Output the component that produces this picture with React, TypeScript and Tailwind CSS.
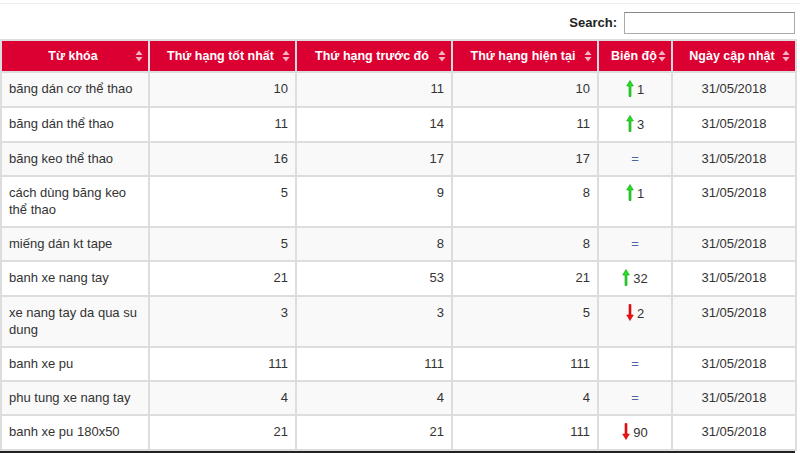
import React from 'react'

type Row = {
  keyword: string
  best: number
  prev: number
  current: number
  change: 'up' | 'down' | 'same'
  amount?: number
}

const rows: Row[] = [
  { keyword: 'băng dán cơ thể thao', best: 10, prev: 11, current: 10, change: 'up', amount: 1 },
  { keyword: 'băng dán thể thao', best: 11, prev: 14, current: 11, change: 'up', amount: 3 },
  { keyword: 'băng keo thể thao', best: 16, prev: 17, current: 17, change: 'same' },
  { keyword: 'cách dùng băng keo thể thao', best: 5, prev: 9, current: 8, change: 'up', amount: 1 },
  { keyword: 'miếng dán kt tape', best: 5, prev: 8, current: 8, change: 'same' },
  { keyword: 'banh xe nang tay', best: 21, prev: 53, current: 21, change: 'up', amount: 32 },
  { keyword: 'xe nang tay da qua su dung', best: 3, prev: 3, current: 5, change: 'down', amount: 2 },
  { keyword: 'banh xe pu', best: 111, prev: 111, current: 111, change: 'same' },
  { keyword: 'phu tung xe nang tay', best: 4, prev: 4, current: 4, change: 'same' },
  { keyword: 'banh xe pu 180x50', best: 21, prev: 21, current: 111, change: 'down', amount: 90 },
]

const headers = ['Từ khóa', 'Thứ hạng tốt nhất', 'Thứ hạng trước đó', 'Thứ hạng hiện tại', 'Biên độ', 'Ngày cập nhật']

const SortIcon = () => (
  <svg width="8" height="12" viewBox="0 0 8 12" className="absolute right-[5px] top-1/2 -translate-y-1/2">
    <path d="M4 0.5 L7.5 5 L0.5 5 Z" fill="#f7b3c2" />
    <path d="M4 11.5 L7.5 7 L0.5 7 Z" fill="#f7b3c2" />
  </svg>
)

const UpArrow = () => (
  <svg width="8" height="17" viewBox="0 0 8 17" className="inline-block align-[-3px] mr-[3px]">
    <path d="M4 0.5 L7.3 6 L5 6 L5 16.5 L3 16.5 L3 6 L0.7 6 Z" fill="#22e022" stroke="#139c13" strokeWidth="0.6" />
  </svg>
)

const DownArrow = () => (
  <svg width="8" height="17" viewBox="0 0 8 17" className="inline-block align-[-3px] mr-[3px]">
    <path d="M4 16.5 L7.3 11 L5 11 L5 0.5 L3 0.5 L3 11 L0.7 11 Z" fill="#f41010" stroke="#c00000" strokeWidth="0.6" />
  </svg>
)

const Change = ({ row }: { row: Row }) => {
  if (row.change === 'same') return <span className="text-[#4f63a8] text-[13px]">=</span>
  return (
    <span className="whitespace-nowrap">
      {row.change === 'up' ? <UpArrow /> : <DownArrow />}
      {row.amount}
    </span>
  )
}

const cell = 'border-2 border-[#ddd] px-[7px] pt-[7px] pb-[8px] align-top'

export default function App() {
  return (
    <div className="w-[800px] h-[453px] overflow-hidden bg-white font-['Liberation_Sans',Arial,sans-serif] text-[13px] text-[#333]">
      <div className="mt-[3px] border-t border-[#eee]" />
      <div className="flex items-center justify-end gap-[7px] pr-[5px] pt-[6px] h-[35px] pb-[3px]">
        <label className="font-bold text-[13px] text-[#222]">Search:</label>
        <input className="w-[171px] h-[22px] border border-[#aaa] border-t-[#888] bg-white outline-none" />
      </div>
      <table className="w-[795px] table-fixed border-collapse leading-[17px]">
        <colgroup>
          <col className="w-[148px]" />
          <col className="w-[147px]" />
          <col className="w-[156px]" />
          <col className="w-[146px]" />
          <col className="w-[74px]" />
          <col className="w-[124px]" />
        </colgroup>
        <thead>
          <tr className="bg-[#dc0032]">
            {headers.map((h) => (
              <th
                key={h}
                className="relative border-2 border-[#ddd] pl-[12px] pr-[16px] py-[6px] leading-[18px] text-center text-white text-[12.5px] font-bold whitespace-nowrap"
              >
                {h}
                <SortIcon />
              </th>
            ))}
          </tr>
        </thead>
        <tbody>
          {rows.map((r, i) => (
            <tr key={r.keyword} className={i % 2 === 0 ? 'bg-[#f9f9f9]' : 'bg-white'}>
              <td className={cell}>{r.keyword}</td>
              <td className={cell + ' text-right'}>{r.best}</td>
              <td className={cell + ' text-right'}>{r.prev}</td>
              <td className={cell + ' text-right'}>{r.current}</td>
              <td className={cell + ' text-center'}>
                <Change row={r} />
              </td>
              <td className={cell + ' text-center'}>31/05/2018</td>
            </tr>
          ))}
        </tbody>
      </table>
      <div className="w-[795px] border-t-2 border-[#222]" />
      <div className="flex justify-start pl-[565px] pt-[2px]">
        <div className="w-[33px] h-[10px] border border-[#aaa] rounded-[3px] bg-[#f4f4f4]" />
      </div>
    </div>
  )
}
